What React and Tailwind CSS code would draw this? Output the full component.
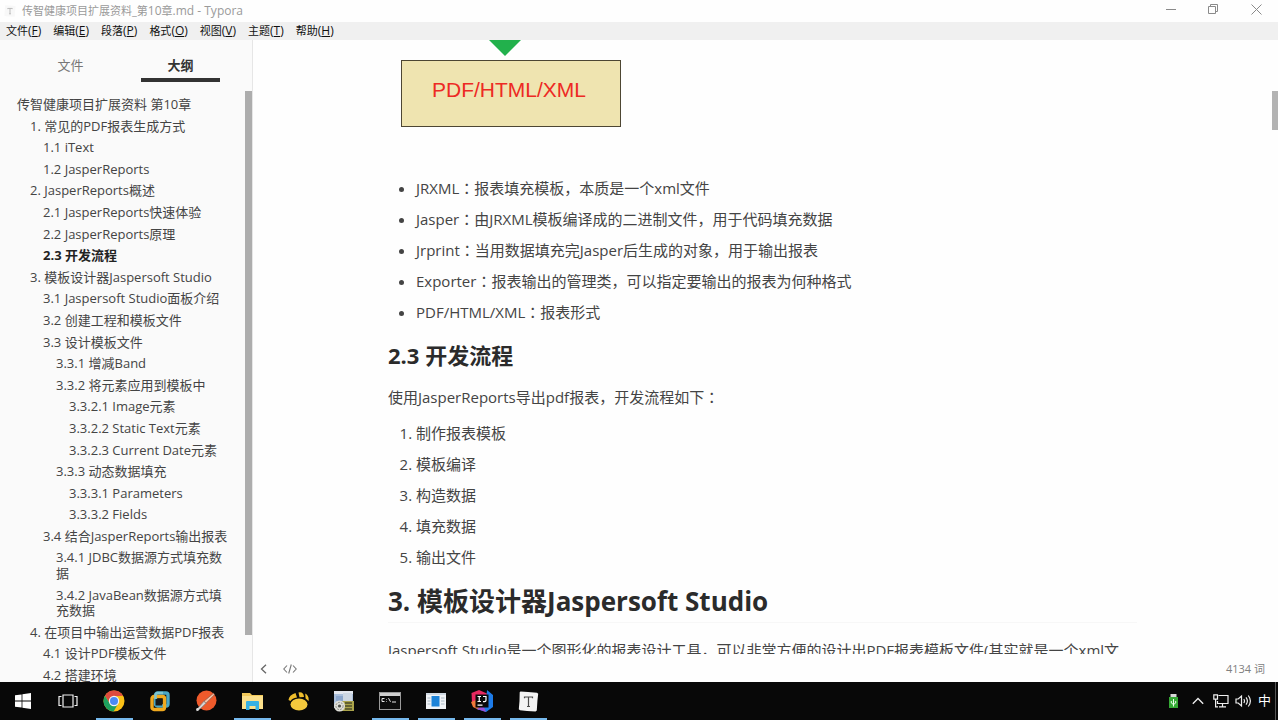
import React, { useState } from 'react';
import clsx from 'clsx';

const menus = [
  { label: '文件', key: 'F' },
  { label: '编辑', key: 'E' },
  { label: '段落', key: 'P' },
  { label: '格式', key: 'O' },
  { label: '视图', key: 'V' },
  { label: '主题', key: 'T' },
  { label: '帮助', key: 'H' }
];

const outline = [
  { level: 0, text: '传智健康项目扩展资料 第10章' },
  { level: 1, text: '1. 常见的PDF报表生成方式' },
  { level: 2, text: '1.1 iText' },
  { level: 2, text: '1.2 JasperReports' },
  { level: 1, text: '2. JasperReports概述' },
  { level: 2, text: '2.1 JasperReports快速体验' },
  { level: 2, text: '2.2 JasperReports原理' },
  { level: 2, text: '2.3 开发流程' },
  { level: 1, text: '3. 模板设计器Jaspersoft Studio' },
  { level: 2, text: '3.1 Jaspersoft Studio面板介绍' },
  { level: 2, text: '3.2 创建工程和模板文件' },
  { level: 2, text: '3.3 设计模板文件' },
  { level: 3, text: '3.3.1 增减Band' },
  { level: 3, text: '3.3.2 将元素应用到模板中' },
  { level: 4, text: '3.3.2.1 Image元素' },
  { level: 4, text: '3.3.2.2 Static Text元素' },
  { level: 4, text: '3.3.2.3 Current Date元素' },
  { level: 3, text: '3.3.3 动态数据填充' },
  { level: 4, text: '3.3.3.1 Parameters' },
  { level: 4, text: '3.3.3.2 Fields' },
  { level: 2, text: '3.4 结合JasperReports输出报表' },
  { level: 3, text: '3.4.1 JDBC数据源方式填充数据' },
  { level: 3, text: '3.4.2 JavaBean数据源方式填充数据' },
  { level: 1, text: '4. 在项目中输出运营数据PDF报表' },
  { level: 2, text: '4.1 设计PDF模板文件' },
  { level: 2, text: '4.2 搭建环境' }
];

const indents = ['pl-[17px]', 'pl-[30px]', 'pl-[43px]', 'pl-[56px]', 'pl-[69px]'];

const terms = [
  'JRXML：报表填充模板，本质是一个xml文件',
  'Jasper：由JRXML模板编译成的二进制文件，用于代码填充数据',
  'Jrprint：当用数据填充完Jasper后生成的对象，用于输出报表',
  'Exporter：报表输出的管理类，可以指定要输出的报表为何种格式',
  'PDF/HTML/XML：报表形式'
];

const steps = ['制作报表模板', '模板编译', '构造数据', '填充数据', '输出文件'];

// full-width colons sit in the middle of their box
const Prose = ({ children }) =>
  children.split(/(：)/).map((part, i) =>
    part === '：' ? (
      <span key={i} className="font-['Noto_Sans_CJK_TC',sans-serif] leading-none">
        {part}
      </span>
    ) : (
      part
    )
  );

/* ---------- taskbar icons ---------- */

const WindowsIcon = () => (
  <svg width="16" height="16" viewBox="0 0 16 16" fill="#fff">
    <path d="M0 2.3 6.6 1.4V7.6H0zM7.4 1.3 16 0V7.6H7.4zM0 8.4H6.6V14.6L0 13.7zM7.4 8.4H16V16L7.4 14.7z" />
  </svg>
);

const TaskViewIcon = () => (
  <svg width="20" height="14" viewBox="0 0 20 14" fill="none" stroke="#f2f2f2" strokeWidth="1.2">
    <path d="M5 1h10v12H5zM3.500 2.500H1v9h2.500M16.500 2.500H19v9h-2.500" />
  </svg>
);

const ChromeIcon = () => (
  <svg width="22" height="22" viewBox="0 0 22 22">
    <circle cx="11" cy="11" r="10.5" fill="#fbc116" />
    <path d="M1.9 5.8A10.5 10.5 0 0 1 20.1 5.8L11 6.2 6.8 13.4z" fill="#dd4b3e" />
    <path d="M1.9 5.8A10.5 10.5 0 0 0 10.6 21.5L15.2 13.4 6.8 13.4z" fill="#1da15f" />
    <circle cx="11" cy="11" r="5.2" fill="#f4f4f4" />
    <circle cx="11" cy="11" r="4" fill="#4a8af4" />
  </svg>
);

const VmwareIcon = () => (
  <svg width="20" height="21" viewBox="0 0 20 21" fill="none">
    <rect x="5.5" y="2" width="12.5" height="13" rx="2" stroke="#4aa7c4" strokeWidth="3.4" />
    <rect x="2" y="5.5" width="12.5" height="13" rx="2" stroke="#f0a91f" strokeWidth="3.4" />
    <path d="M5.5 8V4a2 2 0 0 1 2-2H13" stroke="#7cc5d2" strokeWidth="2.4" />
    <rect x="5.500" y="8" width="6.500" height="6.500" fill="#14181b" />
  </svg>
);

const PostmanIcon = () => (
  <svg width="22" height="22" viewBox="0 0 22 22">
    <circle cx="11.5" cy="10.5" r="10" fill="#ee5a2b" />
    <path d="M18.5 3.2 9 11.2l1.8 2.2 8.6-8.6z" fill="#f5c3a7" stroke="#8b5b4d" strokeWidth=".7" />
    <path d="M9 11.2 3 18l-1.4 2.8L5 19l5.8-5.6z" fill="#d8d4d2" stroke="#7d7d7d" strokeWidth=".7" />
    <circle cx="2.6" cy="19.5" r="1.4" fill="#dedede" />
  </svg>
);

const ExplorerIcon = () => (
  <svg width="21" height="18" viewBox="0 0 21 18">
    <path d="M0 1h8l2 2h11v14H0z" fill="#f2c95a" />
    <path d="M0 4h21v13H0z" fill="#fce08b" />
    <path d="M4 10q0-1 1-1h11q1 0 1 1v8h-3.5v-4h-6v4H4z" fill="#36b1e3" />
  </svg>
);

const NavicatIcon = () => (
  <svg width="21" height="19" viewBox="0 0 21 19" fill="#eebd2c">
    <path d="M0.5 8Q1 3 7.5 1L9 5.500Q4 6 2.500 9zM10.500 .5Q15.500-.5 16 5L11.500 5.200zM17.200 1.500Q21.500 4 20.500 9L17.600 6.500z" />
    <ellipse cx="11" cy="12.500" rx="8.500" ry="6" fill="#f4c93d" />
  </svg>
);

const ToolIcon = () => (
  <svg width="22" height="22" viewBox="0 0 22 22">
    <path d="M1 1h19v17H1z" fill="#a9bfdc" />
    <path d="M1 1h19v3H1z" fill="#e3e7ee" />
    <path d="M3 6h8v5H3z" fill="#8ba6cc" />
    <path d="M10 3h9v8h-9z" fill="#cdd7e3" />
    <path d="M9 11h12v10H9z" fill="#aaa34a" />
    <path d="M12 13h7M12 16h7M12 19h7" stroke="#4c4c28" strokeWidth="1.4" />
    <circle cx="6.5" cy="16" r="5.500" fill="#deded8" />
    <circle cx="6.5" cy="16" r="3.6" fill="none" stroke="#92938a" strokeWidth="1" strokeDasharray="2 1" />
    <circle cx="6.5" cy="16" r="1.6" fill="#50534d" />
  </svg>
);

const CmdIcon = () => (
  <svg width="22" height="18" viewBox="0 0 22 18">
    <rect x=".5" y=".5" width="21" height="17" fill="#0c0c0c" stroke="#9a9a9a" />
    <path d="M1 1h20v3H1z" fill="#d0d0d0" />
    <path d="M5.5 6.5H3v3h2.5M7.5 7v.6M7.5 9v.6M9.5 6.2l2 3.6M13 10h4" fill="none" stroke="#e6e6e6" strokeWidth="1" />
  </svg>
);

const ViewerIcon = () => (
  <svg width="20" height="16" viewBox="0 0 20 16">
    <path d="M0 0h20v16H0z" fill="#f0f3f6" />
    <path d="M0 0h20v2H0z" fill="#cfd9e2" />
    <path d="M5.5 3h8v10.500h-8z" fill="#1c83d8" />
    <path d="M1.500 5h3M1.500 8h3M1.500 11h3M15 5h3.500M15 8h3.500M15 11h3.500" stroke="#a9b8c4" />
  </svg>
);

const IdeaIcon = () => (
  <svg width="22" height="22" viewBox="0 0 22 22">
    <path d="M.5 3 8 0l9 4-9 10-7-2z" fill="#e8285f" />
    <path d="M0 12 8 9v11l-6-3z" fill="#f0793a" />
    <path d="M16 0l6 5v12l-7 5-9-3 9-6z" fill="#1d7be8" />
    <path d="M6 19l6-4 3 7z" fill="#9b4fd4" />
    <path d="M4.500 4.500h13v13h-13z" fill="#0a0a0a" />
    <path d="M6.500 6.500h3.500M8.250 6.500v5M6.500 11.500h3.500M12 6.500h3v3.800q0 1.300-1.500 1.300h-1.500M6.500 15.200h5" fill="none" stroke="#fff" strokeWidth="1.200" />
  </svg>
);

const TyporaIcon = ({ size = 21 }) => (
  <svg width={size} height={size} viewBox="0 0 21 21">
    <path d="M2.500.5 10 1l9 .8 1.200.9-.8 7.300-.6 9.500-1.300 1L9 20l-7-.8-1.200-1L1.500 10l.2-8.700z" fill="#f4f4f4" />
    <path d="M6.500 7.200V6h8v1.200M10.500 6v9.500M9 15.500h3" fill="none" stroke="#4b4b4b" strokeWidth="1.200" />
  </svg>
);

const apps = [
  { name: 'Chrome', icon: <ChromeIcon />, running: true },
  { name: 'VMware', icon: <VmwareIcon /> },
  { name: 'Postman', icon: <PostmanIcon /> },
  { name: 'Explorer', icon: <ExplorerIcon />, running: true },
  { name: 'Navicat', icon: <NavicatIcon /> },
  { name: 'Tools', icon: <ToolIcon /> },
  { name: 'Command Prompt', icon: <CmdIcon />, running: true },
  { name: 'Viewer', icon: <ViewerIcon />, running: true },
  { name: 'IntelliJ IDEA', icon: <IdeaIcon />, running: true },
  { name: 'Typora', icon: <TyporaIcon />, running: true }
];

/* ---------- window parts ---------- */

const TitleBar = () => (
  <header className="flex h-[22px] shrink-0 items-center bg-[#fefefe] pl-1 text-[11px] text-[#9a9a9a]">
    <span className="opacity-50">
      <TyporaIcon size={12} />
    </span>
    <h1 className="ml-[6px] flex-1">
      传智健康项目扩展资料_第<span className="text-[12px]">10</span>章
      <span className="text-[12px]">.md - Typora</span>
    </h1>
    <div className="flex h-full">
      <button aria-label="Minimize" className="flex w-[43px] items-center justify-center pb-[3px]">
        <svg width="11" height="11" viewBox="0 0 11 11" stroke="#8a8a8a">
          <path d="M1 5.500h10" />
        </svg>
      </button>
      <button aria-label="Restore" className="flex w-[43px] items-center justify-center pb-[3px]">
        <svg width="11" height="11" viewBox="0 0 11 11" fill="none" stroke="#8a8a8a">
          <path d="M.5 2.500h7v7h-7zM2.500 2.500v-2h7v7h-2" />
        </svg>
      </button>
      <button aria-label="Close" className="flex w-[43px] items-center justify-center pb-[3px]">
        <svg width="11" height="11" viewBox="0 0 11 11" stroke="#8a8a8a">
          <path d="M.5.5l10 10M10.500.5l-10 10" />
        </svg>
      </button>
    </div>
  </header>
);

const MenuBar = () => (
  <nav className="flex h-[18px] shrink-0 items-center gap-3 bg-[#f0f0f0] pl-[6px] text-[11px] text-[#111]">
    {menus.map((menu) => (
      <button key={menu.key}>
        {menu.label}
        <span className="text-[12px]">
          (<u>{menu.key}</u>)
        </span>
      </button>
    ))}
  </nav>
);

const Sidebar = () => {
  const [tab, setTab] = useState('大纲');
  const [active, setActive] = useState('2.3 开发流程');

  return (
    <aside className="flex w-[253px] shrink-0 flex-col border-r border-[#e6e6e6] bg-[#fafafa] text-[13px] text-[#444]">
      <div className="mb-[9px] flex justify-between pr-8 pl-[31px]">
        {['文件', '大纲'].map((name) => (
          <button
            key={name}
            className={clsx(
              'h-[42px] w-[79px] border-b-4 pt-[11px] leading-[26px]',
              tab === name
                ? 'border-[#333] font-bold text-[#333]'
                : 'border-transparent text-[#777]'
            )}
            onClick={() => setTab(name)}
          >
            {name}
          </button>
        ))}
      </div>
      <div className="flex min-h-0 flex-1">
        <ul className="flex-1 overflow-hidden pt-[3px] pr-[17px] leading-[1.2]">
          {outline.map((item) => (
            <li key={item.text} className={clsx('py-[3px]', indents[item.level])}>
              <a
                href="#"
                className={clsx('block', active === item.text && 'font-bold text-[#222]')}
                onClick={() => setActive(item.text)}
              >
                {item.text}
              </a>
            </li>
          ))}
        </ul>
        <div className="h-[92%] w-[7px] bg-[#adadad]" />
      </div>
    </aside>
  );
};

const Document = () => (
  <article className="mx-auto w-full max-w-[749px] text-[15px] leading-6 text-[#444]">
    <figure className="ml-[13px] flex w-[220px] flex-col">
      <svg className="ml-[88px]" width="32" height="16" viewBox="0 0 32 16">
        <path d="M0 0h32L16 16z" fill="#22b14c" />
      </svg>
      <figcaption className="mt-1 h-[67px] border border-[#4d4633] bg-[#efe4b0] pt-[17px] pr-1 text-center font-['Liberation_Sans',sans-serif] text-[21px] text-[#ed2a24]">
        PDF/HTML/XML
      </figcaption>
    </figure>

    <ul className="mt-[46px] list-disc pl-7 leading-[31px]">
      {terms.map((term) => (
        <li key={term}>
          <Prose>{term}</Prose>
        </li>
      ))}
    </ul>

    <h3 className="mt-[10px] text-[22px] leading-[34px] font-bold text-[#2b2b2b]">2.3 开发流程</h3>
    <p className="mt-[13px]">
      <Prose>使用JasperReports导出pdf报表，开发流程如下：</Prose>
    </p>
    <ol className="mt-[9px] list-decimal pl-7 leading-[31px]">
      {steps.map((step) => (
        <li key={step}>{step}</li>
      ))}
    </ol>

    <h2 className="mt-[11px] border-b border-[#f7f7f7] pb-1 text-[26px] leading-[34px] font-bold text-[#2b2b2b]">
      3. 模板设计器Jaspersoft Studio
    </h2>
    <p className="mt-[15px]">
      Jaspersoft Studio是一个图形化的报表设计工具，可以非常方便的设计出PDF报表模板文件(其实就是一个xml文件)
    </p>
  </article>
);

const Taskbar = () => (
  <footer className="flex h-[38px] shrink-0 items-stretch bg-[#080808] text-white">
    <button aria-label="Start" className="flex w-[45px] items-center justify-center">
      <WindowsIcon />
    </button>
    <button aria-label="Task View" className="flex w-[46px] items-center justify-center">
      <TaskViewIcon />
    </button>
    {apps.map((app) => (
      <button
        key={app.name}
        aria-label={app.name}
        className="flex w-[46px] flex-col items-center"
      >
        <span className="flex flex-1 items-center pt-[2px]">{app.icon}</span>
        <span className={clsx('h-[2px] w-[37px]', app.running && 'bg-[#76b9ed]')} />
      </button>
    ))}
    <div className="mr-[2px] ml-auto flex items-center gap-[6px] border-r border-[#555] pr-1">
      <svg className="mr-2" width="9" height="14" viewBox="0 0 9 14">
        <path d="M1.500 0h6v4h-6z" fill="#d9d9d9" />
        <path d="M0 3h9v11H0z" fill="#35a935" />
        <path d="M4.500 5v7.500M2.300 7v2l2.200 1.500L6.700 9V7" fill="none" stroke="#e9ffe9" />
      </svg>
      <svg className="mr-[3px]" width="12" height="8" viewBox="0 0 12 8" fill="none" stroke="#eee" strokeWidth="1.300">
        <path d="M.8 6.800 6 1.500l5.200 5.300" />
      </svg>
      <svg width="16" height="14" viewBox="0 0 16 14" fill="none" stroke="#eee" strokeWidth="1.200">
        <path d="M5.500 1.500H15v8H4.500V7M9.500 9.500v3M6 12.800h7M.8.800h3.700v4.400H.8zM2.600 5.200v7.600H5" />
      </svg>
      <svg width="17" height="14" viewBox="0 0 17 14" fill="none" stroke="#eee" strokeWidth="1.200">
        <path d="M1 5v4h2.200L6.500 12V2L3.200 5zM8.800 5q1.400 2 0 4M11 3.300q2.800 3.700 0 7.400M13.300 1.500q4.200 5.500 0 11" />
      </svg>
      <span className="text-[13px]">中</span>
    </div>
  </footer>
);

const App = () => {
  return (
    <div className="flex h-screen flex-col overflow-hidden bg-[#fefefe] font-['Open_Sans','Noto_Sans_CJK_SC',sans-serif]">
      <TitleBar />
      <MenuBar />
      <div className="flex min-h-0 flex-1">
        <Sidebar />
        <main className="flex min-w-0 flex-1 flex-col">
          <div className="flex min-h-0 flex-1 overflow-hidden">
            <Document />
            <div className="mt-[51px] h-[39px] w-[6px] shrink-0 bg-[#b3b3b3]" />
          </div>
          <div className="flex h-7 shrink-0 items-center gap-4 pt-[2px] pr-[13px] pl-[7px] text-[11px] text-[#808080]">
            <button aria-label="Toggle sidebar">
              <svg width="7" height="10" viewBox="0 0 7 10" fill="none" stroke="#666" strokeWidth="1.300">
                <path d="M6 .8 1.500 5 6 9.200" />
              </svg>
            </button>
            <button aria-label="Source mode">
              <svg width="14" height="10" viewBox="0 0 14 10" fill="none" stroke="#777" strokeWidth="1.100">
                <path d="M4 1.500.8 5 4 8.500M10 1.500 13.200 5 10 8.500M8.300.5 5.700 9.500" />
              </svg>
            </button>
            <span className="ml-auto">4134 词</span>
          </div>
        </main>
      </div>
      <Taskbar />
    </div>
  );
};

export default App;
